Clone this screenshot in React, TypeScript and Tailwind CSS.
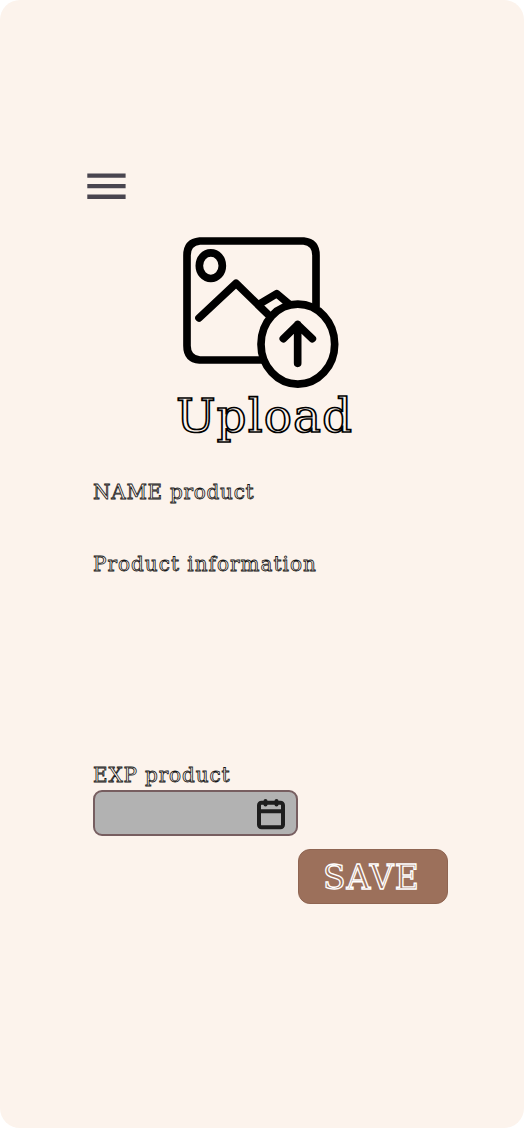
import type { ReactNode } from "react";

function MenuIcon() {
  return (
    <svg viewBox="0 0 39 26" className="block h-[26px] w-[39px]" fill="#49454f">
      <path d="M.3.4h38.300v4.300H.3zM.3 11h38.300v4.300H.3zM.3 21.600h38.300v4.300H.3z" />
    </svg>
  );
}

function UploadImageIcon() {
  return (
    <svg viewBox="0 0 540 510" className="block h-[170px] w-[180px]" fill="none" stroke="#000" strokeWidth="23" strokeLinecap="round" strokeLinejoin="round">
      <path d="M280 405H89Q51 401 51 362V91Q51 52 89 48H401Q438 52 438 91V246" strokeLinecap="butt" />
      <ellipse cx="122.500" cy="122" rx="34.500" ry="38.500" />
      <path d="M87 279 198 175 302 276" />
      <path d="M267 238 320 206 362 241" />
      <ellipse cx="383.500" cy="357.500" rx="110.500" ry="120" fill="#fcf3ec" />
      <path d="M383 415V299M340 341 383 299 427 341" />
    </svg>
  );
}

function CalendarIcon() {
  return (
    <svg viewBox="0 0 28 32" className="block h-8 w-7" fill="none" stroke="#1e1e1e" strokeWidth="4" strokeLinecap="round" strokeLinejoin="round">
      <rect x="2" y="4.700" width="24" height="24.500" rx="2.500" />
      <path d="M2 13.300H26M8.500 3V6.500M19.500 3V6.500" />
    </svg>
  );
}

function Label({ children }: { children: ReactNode }) {
  return (
    <span className="block h-6 whitespace-nowrap text-[20px] leading-6 text-[#fcf3ec] [-webkit-text-stroke:0.8px_#141414]">
      {children}
    </span>
  );
}

export default function App() {
  return (
    <div className="h-[1128px] w-[524px] bg-white font-['DejaVu_Serif',serif]">
      <main className="flex h-full flex-col rounded-[20px] bg-[#fcf3ec] pt-[173px]">
        <button aria-label="Menu" className="ml-[87px] h-[26px] w-[39px]">
          <MenuIcon />
        </button>
        <div className="ml-[170px] mt-[26px]">
          <UploadImageIcon />
        </div>
        <h1 className="-mt-[7px] ml-[176px] h-14 whitespace-nowrap text-[47px] leading-[56px] tracking-[1px] text-[#fcf3ec] [-webkit-text-stroke:1.7px_#000]">
          Upload
        </h1>
        <div className="ml-[93px] mt-9 tracking-[0.72px]">
          <Label>NAME product</Label>
        </div>
        <div className="ml-[93px] mt-12 tracking-[1px]">
          <Label>Product information</Label>
        </div>
        <div className="ml-[93px] mt-[187px] tracking-[0.85px]">
          <Label>EXP product</Label>
        </div>
        <button aria-label="Choose date" className="ml-[93px] mt-[3px] flex h-[46px] w-[205px] items-center justify-end rounded-[9px] border-2 border-[#775e60] bg-[#b2b2b2] pr-[11px] pt-[2px]">
          <CalendarIcon />
        </button>
        <button className="ml-[298px] mt-[13px] flex h-[55px] w-[150px] items-center rounded-[12px] border border-[#8f6552] bg-[#9c705b] pl-[24px] pt-[2px] text-[33px] leading-10 tracking-[1px] text-[#9c705b] [-webkit-text-stroke:1.3px_#fff]">
          SAVE
        </button>
      </main>
    </div>
  );
}
